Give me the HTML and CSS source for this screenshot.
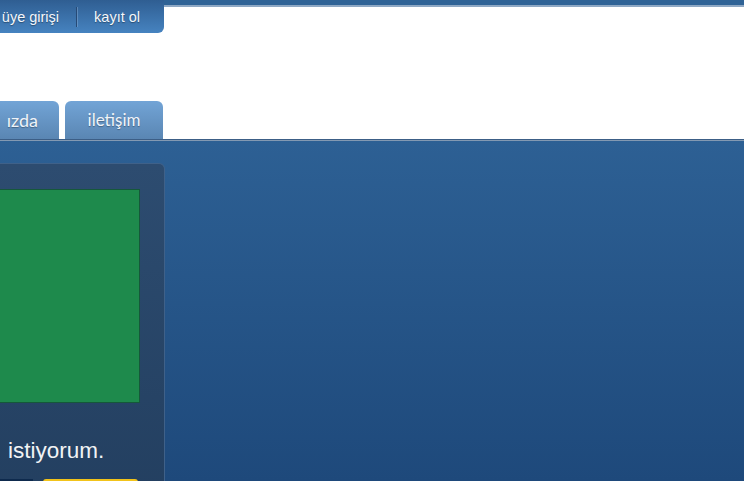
FILE: index.html
```html
<!DOCTYPE html>
<html lang="tr">
<head>
<meta charset="utf-8">
<title>Sayfa</title>
<link rel="stylesheet" href="styles.css">
</head>
<body>
<header class="header">
  <div class="topbar">
    <div class="account">
      <a class="account-link" href="#">üye girişi</a>
      <span class="account-sep"></span>
      <a class="account-link" href="#">kayıt ol</a>
    </div>
    <div class="topstrip"></div>
  </div>
  <nav class="tabs">
    <a class="tab tab-first" href="#">ızda</a>
    <a class="tab" href="#">iletişim</a>
  </nav>
</header>
<main class="main">
  <section class="panel">
    <div class="slide"></div>
    <p class="panel-text">istiyorum.</p>
    <div class="panel-buttons">
      <span class="btn btn-dark"></span>
      <span class="btn btn-yellow"></span>
    </div>
  </section>
</main>
</body>
</html>
```

FILE: styles.css
```css
html, body {
  margin: 0;
  padding: 0;
}
body {
  width: 744px;
  height: 481px;
  overflow: hidden;
  background: #ffffff;
  font-family: "Liberation Sans", Arial, sans-serif;
}
a { text-decoration: none; }

.header {
  height: 139px;
  display: flex;
  flex-direction: column;
  justify-content: space-between;
  background: #ffffff;
}
.topbar {
  display: flex;
  align-items: flex-start;
}
.account {
  flex: 0 0 164px;
  height: 33px;
  box-sizing: border-box;
  display: flex;
  align-items: center;
  justify-content: flex-end;
  padding-right: 24px;
  white-space: nowrap;
  border-bottom-right-radius: 6px;
  background: linear-gradient(#2f5e92, #4683c0);
}
.account-link {
  color: #f4f7fb;
  font-size: 14.5px;
  text-shadow: 0 1px 1px rgba(0, 0, 0, 0.35);
}
.account-sep {
  width: 1px;
  height: 20px;
  margin: 0 17px 0 17px;
  background: #264a76;
  box-shadow: 1px 0 0 rgba(140, 175, 215, 0.45);
}
.topstrip {
  flex: 1;
  height: 5px;
  background: #2f6396;
  border-bottom: 2px solid #8ea8c4;
}

.tabs {
  display: flex;
  gap: 6px;
}
.tab {
  height: 38px;
  box-sizing: border-box;
  padding-top: 8px;
  text-align: center;
  color: #eef3f9;
  font-family: Lato, "Open Sans", sans-serif;
  font-size: 17px;
  text-shadow: 0 1px 1px rgba(0, 0, 0, 0.3);
  border-radius: 6px 6px 0 0;
  background: linear-gradient(#72a4d6, #5a86b3);
  width: 98px;
}
.tab-first {
  width: 59px;
  border-top-left-radius: 0;
  text-align: right;
  padding-right: 21px;
  white-space: nowrap;
  font-size: 18px;
}

.main {
  height: 342px;
  border-top: 1px solid #3c5e86;
  box-shadow: inset 0 1px 0 #8399b2;
  background: linear-gradient(#2d6094, #1e497b);
  padding-top: 23px;
  box-sizing: border-box;
  overflow: hidden;
}
.panel {
  width: 165px;
  height: 340px;
  box-sizing: border-box;
  border: 1px solid #3f6189;
  border-left: 0;
  border-radius: 0 6px 0 0;
  background: linear-gradient(#2d4c70, #233f60);
  padding: 25px 0 0 0;
  display: flex;
  flex-direction: column;
}
.slide {
  width: 140px;
  height: 214px;
  box-sizing: border-box;
  background: #1e8a4c;
  border: 1px solid #15583a;
  border-left: 0;
  flex: none;
}
.panel-text {
  margin: 31px 0 0 8px;
  color: #f1f3f5;
  font-size: 22.5px;
  white-space: nowrap;
  line-height: 34px;
}
.panel-buttons {
  display: flex;
  gap: 10px;
  margin-top: 11px;
}
.btn {
  height: 20px;
  display: block;
}
.btn-dark {
  width: 33px;
  background: #0e2a4d;
}
.btn-yellow {
  width: 95px;
  background: #f2c31a;
  border-radius: 3px 3px 0 0;
}
```
